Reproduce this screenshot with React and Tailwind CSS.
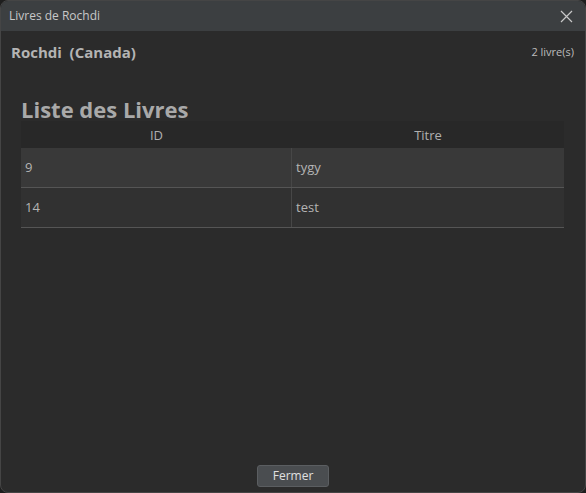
import React from "react";

const books = [
  { id: 9, titre: "tygy" },
  { id: 14, titre: "test" },
];

const App = () => {
  return (
    <div className="w-[586px] h-[493px] bg-[#1e1e1e] font-['Open_Sans',sans-serif]">
      <div className="w-full h-full flex flex-col rounded-lg overflow-hidden border border-[#454545] bg-[#2b2b2b]">
        {/* Title bar */}
        <div className="h-[30px] shrink-0 flex items-center justify-between bg-[#3c3f41] pl-2 pr-3">
          <span className="text-[12px] text-[#c8c8c8]">Livres de Rochdi</span>
          <svg width="13" height="13" viewBox="0 0 13 13" className="text-[#c8c8c8]">
            <path d="M1 1 L12 12 M12 1 L1 12" stroke="currentColor" strokeWidth="1.2" />
          </svg>
        </div>

        {/* Body */}
        <div className="flex-1 flex flex-col px-[10px] pt-[10px] pb-[5px]">
          <div className="flex items-center justify-between">
            <span className="text-[15px] font-bold text-[#b4b4b4]">Rochdi&nbsp;&nbsp;(Canada)</span>
            <span className="text-[11px] text-[#bdbdbd] pr-[1px]">2 livre(s)</span>
          </div>

          <div className="mx-[10px] mt-[34px]">
            <h1 className="text-[22px] leading-[22px] font-bold text-[#a9a9a9]">Liste des Livres</h1>
            <div className="mt-[1px] w-[543px]">
              <div className="grid grid-cols-[271px_1fr] h-[27px] pt-[4px] bg-[#282828] text-[13px] text-[#b0b0b0]">
                <div className="flex items-center justify-center">ID</div>
                <div className="flex items-center justify-center">Titre</div>
              </div>
              {books.map((b, i) => (
                <div
                  key={b.id}
                  className={`grid grid-cols-[271px_1fr] h-[40px] border-b border-[#555555] text-[13px] text-[#b4b4b4] ${i === 0 ? "bg-[#393939]" : "bg-[#313131]"}`}
                >
                  <div className="flex items-center px-[4px] pt-[2px] border-r border-[#474747]">{b.id}</div>
                  <div className="flex items-center px-[4px] pt-[2px]">{b.titre}</div>
                </div>
              ))}
            </div>
          </div>

          <div className="flex-1" />

          <div className="flex justify-center">
            <button className="w-[72px] h-[22px] rounded-[3px] bg-[#4a4d50] border border-[#5b5e61] text-[12px] text-[#e0e0e0] leading-none">
              Fermer
            </button>
          </div>
        </div>
      </div>
    </div>
  );
};

export default App;
